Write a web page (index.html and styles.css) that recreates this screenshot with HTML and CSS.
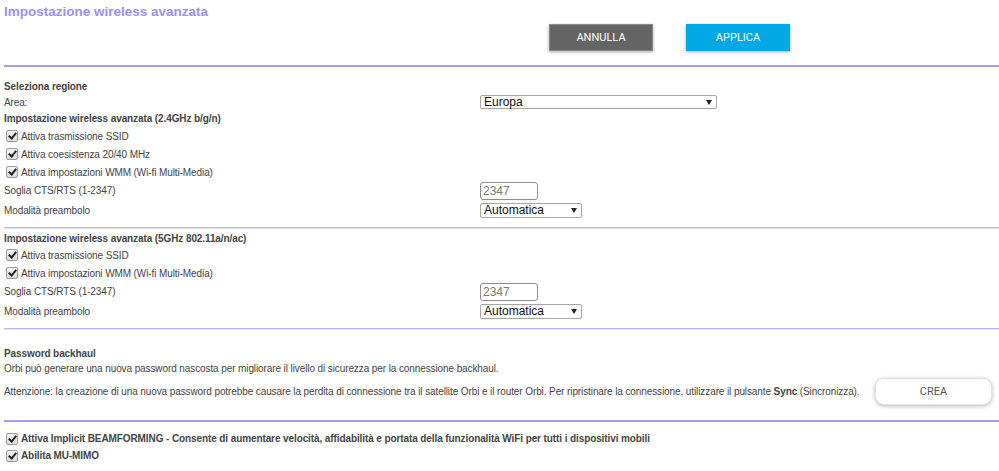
FILE: index.html
```html
<!DOCTYPE html>
<html lang="it">

<head>
    <meta charset="UTF-8">
    <meta name="viewport" content="width=device-width, initial-scale=1.0">
    <title>Impostazione wireless avanzata</title>
    <link rel="stylesheet" href="styles.css">
</head>

<body>
    <div class="page">
        <div class="title">Impostazione wireless avanzata</div>
        <div class="actions">
            <button class="btn btn-cancel">ANNULLA</button>
            <button class="btn btn-apply">APPLICA</button>
        </div>
        <div class="divider"></div>

        <div class="section sec-region">
            <div class="row r16 bold">Seleziona regione</div>
            <div class="row r16">
                <span class="label">Area:</span>
                <div class="select wide">Europa</div>
            </div>
            <div class="row r17 bold">Impostazione wireless avanzata (2.4GHz b/g/n)</div>
            <div class="row check"><span class="box"></span>Attiva trasmissione SSID</div>
            <div class="row check"><span class="box"></span>Attiva coesistenza 20/40 MHz</div>
            <div class="row check"><span class="box"></span>Attiva impostazioni WMM (Wi-fi Multi-Media)</div>
            <div class="row r19">
                <span class="label">Soglia CTS/RTS (1-2347)</span>
                <div class="input">2347</div>
            </div>
            <div class="row r20">
                <span class="label">Modalità preambolo</span>
                <div class="select small">Automatica</div>
            </div>
        </div>
        <div class="divider light"></div>

        <div class="section sec-5g">
            <div class="row r16 bold">Impostazione wireless avanzata (5GHz 802.11a/n/ac)</div>
            <div class="row check"><span class="box"></span>Attiva trasmissione SSID</div>
            <div class="row check"><span class="box"></span>Attiva impostazioni WMM (Wi-fi Multi-Media)</div>
            <div class="row r19">
                <span class="label">Soglia CTS/RTS (1-2347)</span>
                <div class="input">2347</div>
            </div>
            <div class="row r20">
                <span class="label">Modalità preambolo</span>
                <div class="select small">Automatica</div>
            </div>
        </div>
        <div class="divider light"></div>

        <div class="section sec-backhaul">
            <div class="row r16 bold">Password backhaul</div>
            <div class="row r14">Orbi può generare una nuova password nascosta per migliorare il livello di sicurezza per la connessione backhaul.</div>
            <div class="row warn">
                <span>Attenzione: la creazione di una nuova password potrebbe causare la perdita di connessione tra il satellite Orbi e il router Orbi. Per ripristinare la connessione, utilizzare il pulsante <b>Sync</b> (Sincronizza).</span>
                <button class="btn btn-create">CREA</button>
            </div>
        </div>
        <div class="divider"></div>

        <div class="section sec-extra">
            <div class="row check bold"><span class="box"></span>Attiva Implicit BEAMFORMING - Consente di aumentare velocità, affidabilità e portata della funzionalità WiFi per tutti i dispositivi mobili</div>
            <div class="row check bold"><span class="box"></span>Abilita MU-MIMO</div>
        </div>
    </div>
</body>

</html>
```

FILE: styles.css
```css
body{
    margin: 0;
    font-family: "Liberation Sans", Arial, sans-serif;
    font-size: 10px;
    letter-spacing: -0.1px;
    color: #444;
    background: #fff;
}
.page{
    padding-left: 4px;
    overflow: hidden;
    height: 471px;
}
.title{
    height: 22px;
    line-height: 22px;
    margin-top: 1px;
    letter-spacing: 0;
    font-size: 13.5px;
    font-weight: bold;
    color: #9c8ff6;
}
.actions{
    display: flex;
    gap: 33px;
    padding-left: 545px;
    margin-top: 1px;
}
.btn{
    font-family: Roboto, "Liberation Sans", sans-serif;
    letter-spacing: 0;
    font-size: 11px;
    border: none;
    cursor: pointer;
}
.btn-cancel,
.btn-apply{
    width: 104px;
    height: 27px;
    color: #fff;
    box-shadow: 0 1px 3px rgba(0,0,0,0.35);
}
.btn-cancel{
    background: #646464;
    border: 1px solid #8a8a8a;
}
.btn-apply{
    background: #00a9e6;
}
.divider{
    height: 2px;
    background: #a59cf6;
    margin-top: 14px;
}
.divider.light{
    height: 1px;
    background: #b9b3f2;
    border-bottom: 1px solid #e4e1fb;
}
.section{
    display: flex;
    flex-direction: column;
}
.sec-region{
    padding-top: 11px;
}
.sec-5g{
    padding-top: 1px;
}
.sec-backhaul{
    padding-top: 15px;
}
.sec-extra{
    padding-top: 8px;
}
.sec-region + .divider{
    margin-top: 7px;
}
.sec-5g + .divider{
    margin-top: 7px;
}
.sec-backhaul + .divider{
    margin-top: 14px;
}
.row{
    display: flex;
    align-items: center;
    height: 18px;
    white-space: nowrap;
}
.r14{ height: 14px; }
.r16{ height: 16px; }
.r17{ height: 17px; }
.r19{ height: 19px; }
.r20{ height: 20px; }
.bold{
    font-weight: bold;
}
.label{
    width: 476px;
    flex: none;
}
.check{
    padding-left: 2px;
}
.sec-extra .check{
    height: 17px;
}
.box{
    position: relative;
    width: 10px;
    height: 10px;
    margin-right: 3px;
    border: 1px solid #9a9a9a;
    border-radius: 2px;
    background: linear-gradient(#f4f4f4, #dcdcdc);
    flex: none;
}
.box::after{
    content: "";
    position: absolute;
    left: 3px;
    top: 0px;
    width: 3px;
    height: 6px;
    border: solid #222;
    border-width: 0 2px 2px 0;
    transform: rotate(40deg);
}
.select{
    position: relative;
    box-sizing: border-box;
    height: 14px;
    line-height: 12px;
    padding-left: 3px;
    border: 1px solid #a6a6a6;
    border-radius: 2px;
    letter-spacing: 0;
    font-size: 12px;
    color: #111;
    background: #fff;
}
.select::after{
    content: "";
    position: absolute;
    right: 4px;
    top: 4px;
    border-left: 3px solid transparent;
    border-right: 3px solid transparent;
    border-top: 5px solid #222;
}
.select.wide{
    width: 237px;
}
.select.small{
    width: 102px;
    height: 15px;
    line-height: 13px;
}
.input{
    box-sizing: border-box;
    width: 58px;
    height: 18px;
    line-height: 16px;
    padding-left: 2px;
    border: 1px solid #8c8c8c;
    border-radius: 3px;
    letter-spacing: 0;
    font-size: 12px;
    color: #777;
}
.warn{
    height: 29px;
    margin-top: 2px;
}
.btn-create{
    margin-left: auto;
    margin-right: 7px;
    width: 117px;
    height: 27px;
    border-radius: 9px;
    background: #fff;
    color: #555;
    border: 1px solid #e2e2e2;
    box-shadow: 0 1px 4px rgba(0,0,0,0.3);
}
```
